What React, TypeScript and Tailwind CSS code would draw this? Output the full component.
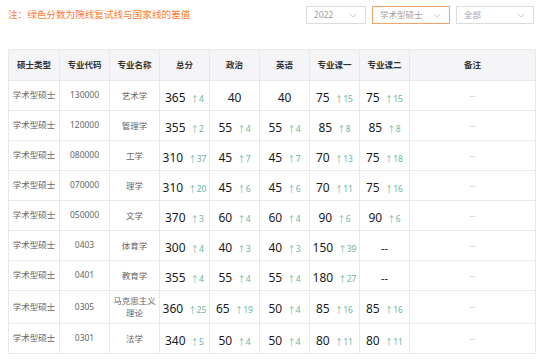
import React from "react";

type Cell = [string, string?];

const rows: { code: string; name: string; scores: (Cell | null)[] }[] = [
  { code: "130000", name: "艺术学", scores: [["365", "4"], ["40"], ["40"], ["75", "15"], ["75", "15"]] },
  { code: "120000", name: "管理学", scores: [["355", "2"], ["55", "4"], ["55", "4"], ["85", "8"], ["85", "8"]] },
  { code: "080000", name: "工学", scores: [["310", "37"], ["45", "7"], ["45", "7"], ["70", "13"], ["75", "18"]] },
  { code: "070000", name: "理学", scores: [["310", "20"], ["45", "6"], ["45", "6"], ["70", "11"], ["75", "16"]] },
  { code: "050000", name: "文学", scores: [["370", "3"], ["60", "4"], ["60", "4"], ["90", "6"], ["90", "6"]] },
  { code: "0403", name: "体育学", scores: [["300", "4"], ["40", "3"], ["40", "3"], ["150", "39"], null] },
  { code: "0401", name: "教育学", scores: [["355", "4"], ["55", "4"], ["55", "4"], ["180", "27"], null] },
  { code: "0305", name: "马克思主义理论", scores: [["360", "25"], ["65", "19"], ["50", "4"], ["85", "16"], ["85", "16"]] },
  { code: "0301", name: "法学", scores: [["340", "5"], ["50", "4"], ["50", "4"], ["80", "11"], ["80", "11"]] },
];

const headers = ["硕士类型", "专业代码", "专业名称", "总分", "政治", "英语", "专业课一", "专业课二", "备注"];
const widths = ["w-[51px]", "w-[50px]", "w-[50px]", "w-[50px]", "w-[50px]", "w-[50px]", "w-[50px]", "w-[50px]", "w-[126px]"];

function Chevron() {
  return (
    <svg width="8" height="5" viewBox="0 0 8 5" fill="none" className="shrink-0">
      <path d="M0.5 0.5 L4 4 L7.5 0.5" stroke="#c4c4c4" strokeWidth="0.8" />
    </svg>
  );
}

function Select({ label, w, active }: { label: string; w: string; active?: boolean }) {
  return (
    <div
      className={`${w} h-[18px] flex items-center justify-between pl-[7px] pr-[8px] bg-white border ${
        active ? "border-[#f0a46a]" : "border-[#dcdcdc]"
      }`}
    >
      <span className="text-[8.5px] text-[#a0a0a0] leading-none">{label}</span>
      <Chevron />
    </div>
  );
}

function Score({ cell }: { cell: Cell | null }) {
  if (!cell) return <span className="text-[11px] text-[#222]">--</span>;
  return (
    <span className="whitespace-nowrap">
      <span className="text-[12px] text-[#1a1a1a]">{cell[0]}</span>
      {cell[1] && <span className="text-[8.5px] text-[#6ab5a1] ml-[5px]">↑{cell[1]}</span>}
    </span>
  );
}

export default function App() {
  return (
    <div
      className="w-[542px] h-[359px] bg-white px-[8px] overflow-hidden"
      style={{ fontFamily: '"Noto Sans", "Noto Sans CJK SC", sans-serif' }}
    >
      <div className="h-[30px] flex items-center justify-between">
        <p className="text-[9.6px] text-[#ff7a2e] leading-none">注：绿色分数为院线复试线与国家线的差值</p>
        <div className="flex gap-[6px]">
          <Select label="2022" w="w-[60px]" />
          <Select label="学术型硕士" w="w-[78px]" active />
          <Select label="全部" w="w-[78px]" />
        </div>
      </div>

      <table className="mt-[19px] w-[527px] table-fixed border-collapse">
        <thead>
          <tr className="h-[31px] bg-[#f5f5f7]">
            {headers.map((h, i) => (
              <th
                key={h}
                className={`${widths[i]} border border-[#e8e8e8] text-[8.5px] font-bold text-[#333] text-center`}
              >
                {h}
              </th>
            ))}
          </tr>
        </thead>
        <tbody>
          {rows.map((r) => (
            <tr key={r.code} className="h-[30px]">
              <td className="border border-[#e8e8e8] text-[8.5px] text-[#666] text-center">学术型硕士</td>
              <td className="border border-[#e8e8e8] text-[8.5px] text-[#666] text-center">{r.code}</td>
              <td className="border border-[#e8e8e8] text-[8.5px] leading-[12px] text-[#666] text-center px-[2px] py-[4px]">
                {r.name}
              </td>
              {r.scores.map((s, i) => (
                <td key={i} className="border border-[#e8e8e8] text-center leading-none">
                  <Score cell={s} />
                </td>
              ))}
              <td className="border border-[#e8e8e8] text-[8px] text-[#c0c0c0] text-center">--</td>
            </tr>
          ))}
        </tbody>
      </table>
    </div>
  );
}
